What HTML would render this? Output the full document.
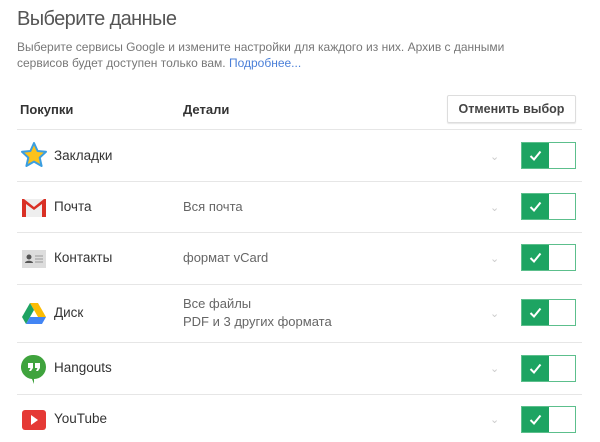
<!DOCTYPE html>
<html><head><meta charset="utf-8"><style>
body{margin:0;width:600px;height:442px;background:#fff;font-family:"Liberation Sans",sans-serif;position:relative;overflow:hidden}
.a{position:absolute;white-space:nowrap}
.h{left:17px;top:8px;font-size:20px;color:#555;letter-spacing:-0.6px}
.d{left:17px;font-size:12px;color:#777}
.line{position:absolute;left:17px;width:565px;height:1px;background:#e6e6e6}
.th{font-size:13px;font-weight:bold;color:#333}
.btn{left:447px;top:95px;width:127px;height:26px;border:1px solid #ddd;border-radius:2px;box-shadow:0 1px 1px rgba(0,0,0,.1);font-size:12.5px;font-weight:bold;color:#444;text-align:center;line-height:26px}
.name{left:54px;font-size:13.5px;color:#333}
.det{left:183px;font-size:13px;color:#666;line-height:18px}
.chev{left:490px;font-size:11px;color:#ccc}
.tg{position:absolute;left:521px;width:53px;height:25px;border:1px solid #5cbf8c;background:#fff}
.tg i{position:absolute;left:0;top:0;width:27px;height:25px;background:#1da462}
.tg svg{position:absolute;left:7px;top:7px}
.ic{position:absolute;left:21px}
</style></head><body>
<div class="a h">Выберите данные</div>
<div class="a d" style="top:40px">Выберите сервисы Google и измените настройки для каждого из них. Архив с данными</div>
<div class="a d" style="top:56px">сервисов будет доступен только вам. <span style="color:#4a7fd8">Подробнее...</span></div>
<div class="a th" style="left:20px;top:102px">Покупки</div>
<div class="a th" style="left:183px;top:102px">Детали</div>
<div class="a btn">Отменить выбор</div>

<div class="line" style="top:129px"></div>
<div class="line" style="top:181px"></div>
<div class="line" style="top:232px"></div>
<div class="line" style="top:284px"></div>
<div class="line" style="top:342px"></div>
<div class="line" style="top:394px"></div>

<svg class="ic" style="top:142px" width="26" height="28" viewBox="0 0 26 28"><path d="M13 1l3.6 8 8.4.8-6.3 5.8 1.9 8.4L13 19.6 5.4 24l1.9-8.4L1 9.8 9.4 9z" fill="#fcc21b" stroke="#3b9ee0" stroke-width="2" stroke-linejoin="round"/></svg>
<div class="a name" style="top:148px">Закладки</div>
<svg class="ic" style="top:198px" width="26" height="20" viewBox="0 0 26 20"><rect x="1" y="1" width="24" height="18" fill="#eee"/><path d="M1 1v18h4V6l8 6 8-6v13h4V1h-2l-10 8L3 1z" fill="#d93025"/></svg>
<div class="a name" style="top:199px">Почта</div>
<div class="a det" style="top:198px">Вся почта</div>
<svg class="ic" style="top:249px" width="26" height="20" viewBox="0 0 26 20"><rect x="1" y="1" width="24" height="18" fill="#ddd"/><circle cx="8" cy="8" r="2.5" fill="#555"/><path d="M4 14c0-3 8-3 8 0z" fill="#555"/><path d="M14 7h8M14 10h8M14 13h8" stroke="#999"/></svg>
<div class="a name" style="top:250px">Контакты</div>
<div class="a det" style="top:249px">формат vCard</div>
<svg class="ic" style="top:302px" width="26" height="22" viewBox="0 0 26 22"><path d="M9 1h8l8 14h-8z" fill="#fbbc04"/><path d="M9 1l4 7-8 14-4-7z" fill="#1ea362"/><path d="M5 22l4-7h16l-4 7z" fill="#4285f4"/></svg>
<div class="a name" style="top:305px">Диск</div>
<div class="a det" style="top:295px">Все файлы<br>PDF и 3 других формата</div>
<svg class="ic" style="top:354px" width="26" height="30" viewBox="0 0 26 30"><path d="M13 1a12 12 0 0 1 0 24v5l-2-5A12 12 0 0 1 13 1z" fill="#3fa33d"/><path d="M7 9h5v5l-2 3H8l1.5-3H7zM14 9h5v5l-2 3h-2l1.5-3H14z" fill="#fff"/></svg>
<div class="a name" style="top:360px">Hangouts</div>
<svg class="ic" style="top:409px" width="26" height="22" viewBox="0 0 26 22"><rect x="1" y="1" width="24" height="20" rx="3" fill="#e53935"/><path d="M10 6l7 5-7 5z" fill="#fff"/></svg>
<div class="a name" style="top:411px">YouTube</div>

<div class="a chev" style="top:150px">&#8964;</div>
<div class="a chev" style="top:201px">&#8964;</div>
<div class="a chev" style="top:252px">&#8964;</div>
<div class="a chev" style="top:307px">&#8964;</div>
<div class="a chev" style="top:362px">&#8964;</div>
<div class="a chev" style="top:413px">&#8964;</div>

<div class="tg" style="top:142px"><i></i><svg width="13" height="11"><path d="M1.5 6l3.5 3.5 6.5-8" stroke="#fff" stroke-width="2" fill="none"/></svg></div>
<div class="tg" style="top:193px"><i></i><svg width="13" height="11"><path d="M1.5 6l3.5 3.5 6.5-8" stroke="#fff" stroke-width="2" fill="none"/></svg></div>
<div class="tg" style="top:244px"><i></i><svg width="13" height="11"><path d="M1.5 6l3.5 3.5 6.5-8" stroke="#fff" stroke-width="2" fill="none"/></svg></div>
<div class="tg" style="top:299px"><i></i><svg width="13" height="11"><path d="M1.5 6l3.5 3.5 6.5-8" stroke="#fff" stroke-width="2" fill="none"/></svg></div>
<div class="tg" style="top:355px"><i></i><svg width="13" height="11"><path d="M1.5 6l3.5 3.5 6.5-8" stroke="#fff" stroke-width="2" fill="none"/></svg></div>
<div class="tg" style="top:406px"><i></i><svg width="13" height="11"><path d="M1.5 6l3.5 3.5 6.5-8" stroke="#fff" stroke-width="2" fill="none"/></svg></div>
</body></html>
